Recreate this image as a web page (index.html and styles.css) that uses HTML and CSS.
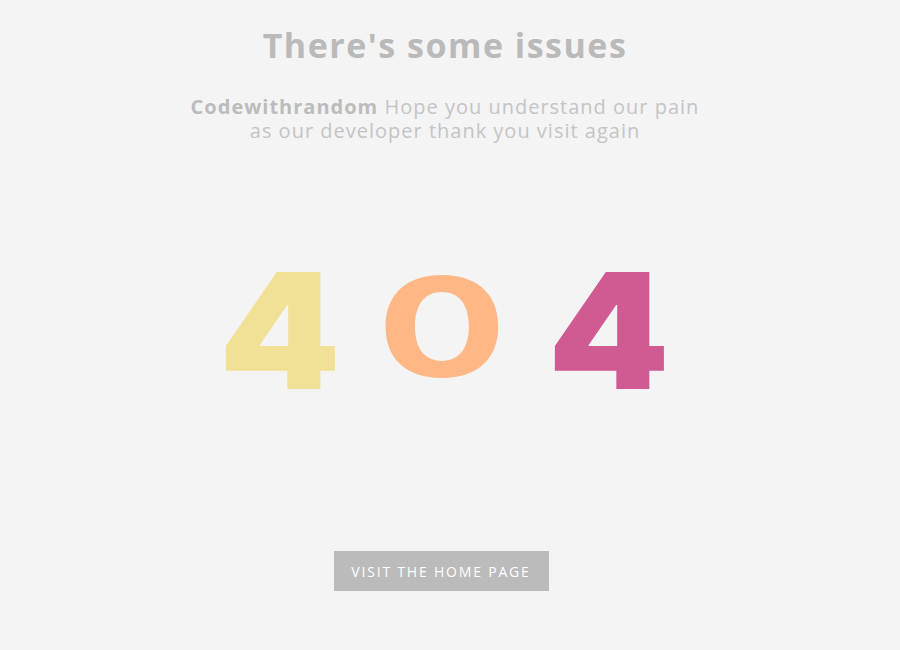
FILE: index.html
```html
<!DOCTYPE html>
<html lang="en">
<head>
<meta charset="utf-8">
<title>404</title>
<link rel="stylesheet" href="styles.css">
</head>
<body>
<main class="page">
  <h1 class="title">There's some issues</h1>
  <p class="lead"><strong>Codewithrandom</strong> Hope you understand our pain<br>as our developer thank you visit again</p>
  <div class="code">
    <span class="digit four-a">4</span>
    <span class="digit zero">0</span>
    <span class="digit four-b">4</span>
  </div>
  <a class="btn" href="#">Visit the home page</a>
</main>
</body>
</html>
```
FILE: styles.css
```css
html, body {
  margin: 0;
  padding: 0;
  background: #f4f4f4;
}
.page {
  width: 890px;
  display: flex;
  flex-direction: column;
  align-items: center;
  font-family: "Open Sans", "Liberation Sans", sans-serif;
  color: #bcbcbc;
}
.title {
  margin: 24px 0 0;
  font-size: 34px;
  font-weight: 700;
  line-height: 42px;
  letter-spacing: 1.5px;
  color: #bababa;
}
.lead {
  margin: 29px 0 0;
  font-size: 20px;
  line-height: 24px;
  letter-spacing: 1px;
  text-align: center;
  color: #c4c4c4;
}
.lead strong {
  color: #bcbcbc;
  font-weight: 700;
}
.code {
  margin-top: 124px;
  margin-right: 7px;
  height: 128px;
  display: flex;
  gap: 51px;
  align-items: flex-start;
  font-family: "Inter", sans-serif;
  font-weight: 900;
}
.digit {
  display: block;
  width: 109px;
  text-align: center;
  font-size: 161px;
  line-height: 128px;
}
.four-a, .four-b {
  transform: scaleX(1.08);
}
.zero {
  width: 118px;
  font-weight: 700;
  transform: translateY(-4px) scale(1.2, 0.86);
}
.four-a { color: #f0e197; }
.zero { color: #ffb786; }
.four-b { color: #d05b93; }
.btn {
  margin-top: 156px;
  margin-right: 8px;
  width: 215px;
  height: 40px;
  display: flex;
  align-items: center;
  justify-content: center;
  background: #bbbbbb;
  color: #ffffff;
  text-decoration: none;
  text-transform: uppercase;
  font-size: 14px;
  letter-spacing: 1.8px;
}
```
